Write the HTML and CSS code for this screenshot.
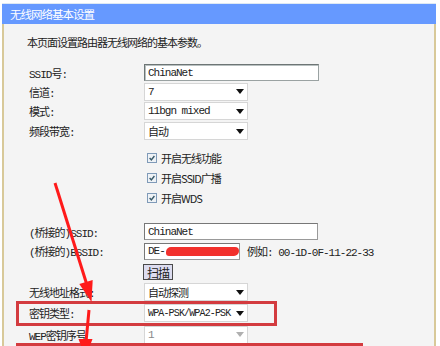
FILE: index.html
```html
<!DOCTYPE html>
<html>
<head>
<meta charset="utf-8">
<link rel="stylesheet" href="styles.css">
</head>
<body>
<div class="panel">
  <div class="hd">无线网络基本设置</div>
  <div class="bd">
    <p class="intro">本页面设置路由器无线网络的基本参数。</p>
    <div class="row h19"><span class="lbl">SSID号:</span><span class="txt ssid">ChinaNet</span></div>
    <div class="row h19"><span class="lbl">信道:</span><span class="sel"><span class="val">7</span><i class="arr"></i></span></div>
    <div class="row h20"><span class="lbl">模式:</span><span class="sel"><span class="val">11bgn mixed</span><i class="arr"></i></span></div>
    <div class="row h20"><span class="lbl">频段带宽:</span><span class="sel"><span class="val">自动</span><i class="arr"></i></span></div>
    <div class="row h20 first-cb"><span class="lbl"></span><span class="cb"><i class="box"><svg viewBox="0 0 10 10"><path d="M2 5 L4.2 7.3 L8 2.5" /></svg></i>开启无线功能</span></div>
    <div class="row h20"><span class="lbl"></span><span class="cb"><i class="box"><svg viewBox="0 0 10 10"><path d="M2 5 L4.2 7.3 L8 2.5" /></svg></i>开启SSID广播</span></div>
    <div class="row h20"><span class="lbl"></span><span class="cb"><i class="box"><svg viewBox="0 0 10 10"><path d="M2 5 L4.2 7.3 L8 2.5" /></svg></i>开启WDS</span></div>
    <div class="row h19 gap"><span class="lbl">(桥接的)SSID:</span><span class="txt bssid-name">ChinaNet</span></div>
    <div class="row h20"><span class="lbl">(桥接的)BSSID:</span><span class="txt mac">DE-<i class="redact"></i></span><span class="eg">例如: 00-1D-0F-11-22-33</span></div>
    <div class="row h22"><span class="lbl"></span><span class="btn">扫描</span></div>
    <div class="row h18"><span class="lbl">无线地址格式:</span><span class="sel"><span class="val">自动探测</span><i class="arr"></i></span></div>
    <div class="row h24"><span class="lbl">密钥类型:</span><span class="sel"><span class="val narrow">WPA-PSK/WPA2-PSK</span><i class="arr"></i></span></div>
    <div class="row h19"><span class="lbl">WEP密钥序号</span><span class="sel off"><span class="val">1</span><i class="arr"></i></span></div>
  </div>
</div>
<div class="mark m1"></div>
<div class="mark m2"></div>
<svg class="arrows" width="440" height="346" viewBox="0 0 440 346">
  <line x1="55" y1="183" x2="87" y2="285" />
  <polygon points="91.5,302 92.7,279.9 79.3,284.1" />
  <line x1="89" y1="310" x2="86" y2="342" />
  <polygon points="85.5,358 78.5,339 92.5,339" />
</svg>
</body>
</html>
```

FILE: styles.css
```css
html, body {
  margin: 0;
  padding: 0;
}
body {
  width: 440px;
  height: 346px;
  overflow: hidden;
  position: relative;
  background: #ffffff;
  font-family: "Liberation Mono", "Noto Sans CJK SC", monospace;
  font-size: 11px;
  letter-spacing: -1px;
  color: #222222;
}
.panel {
  margin: 3px 0 0 2px;
  width: 434px;
  border-top: 1px solid #dfe9f3;
}
.hd {
  height: 20px;
  background: #6699ff;
  color: #ffffff;
  padding-left: 8px;
  display: flex;
  align-items: center;
  font-family: "Noto Sans CJK SC", sans-serif;
  font-size: 11.5px;
}
.bd {
  box-sizing: border-box;
  height: 330px;
  background: #f4f4f4;
  border-left: 2px solid #d8c999;
  border-right: 2px solid #d8c999;
  padding-left: 25px;
}
.intro {
  margin: 0 0 13px -2px;
  padding-top: 10px;
  line-height: 16px;
  font-family: "Noto Sans CJK SC", sans-serif;
}
.row {
  display: flex;
  align-items: center;
}
.h18 { height: 18px; }
.h19 { height: 19px; }
.h20 { height: 20px; }
.h22 { height: 22px; }
.h24 { height: 24px; }
.first-cb { margin-top: 7px; }
.gap { margin-top: 14px; }
.lbl {
  width: 115px;
  flex: none;
  white-space: nowrap;
}
.txt {
  box-sizing: border-box;
  height: 17px;
  background: #ffffff;
  border: 1px solid #8a8a8a;
  padding-left: 3px;
  display: flex;
  align-items: center;
  white-space: nowrap;
  overflow: hidden;
}
.ssid {
  width: 175px;
  border-color: #6d7575 #9aa2a2 #9aa2a2 #6d7575;
  box-shadow: inset 1px 1px 0 #b8c0c0;
}
.bssid-name {
  width: 174px;
  border-color: #777 #999 #999 #777;
}
.mac {
  width: 96px;
  border-color: #777 #999 #999 #777;
}
.redact {
  display: inline-block;
  width: 74px;
  height: 9px;
  margin-left: 1px;
  background: #f2302c;
  border-radius: 5px 4px 5px 3px;
}
.eg {
  margin-left: 7px;
  white-space: nowrap;
}
.sel {
  box-sizing: border-box;
  width: 104px;
  height: 18px;
  background: #ffffff;
  border: 1px solid #d6d6d6;
  padding: 0 0 0 3px;
  display: flex;
  align-items: center;
  justify-content: space-between;
  white-space: nowrap;
}
.sel .narrow {
  font-size: 10px;
  letter-spacing: -0.85px;
}
.sel .arr {
  width: 0;
  height: 0;
  margin-right: 3px;
  border-left: 4px solid transparent;
  border-right: 4px solid transparent;
  border-top: 5px solid #111111;
}
.sel.off .val { color: #888888; }
.sel.off .arr { border-top-color: #b0b0b0; }
.cb {
  display: flex;
  align-items: center;
  margin-left: 3px;
  font-family: "Noto Sans CJK SC", sans-serif;
}
.cb .box {
  box-sizing: border-box;
  width: 10px;
  height: 10px;
  margin-right: 4px;
  border: 1px solid #7f9ab8;
  background: #eef2f6;
  display: flex;
}
.cb .box svg {
  width: 8px;
  height: 8px;
  fill: none;
  stroke: #3a5a6a;
  stroke-width: 1.8;
}
.btn {
  box-sizing: border-box;
  width: 30px;
  height: 16px;
  margin-left: -1px;
  border: 1px solid #4a4a4a;
  background: #dcdcef;
  display: flex;
  align-items: center;
  justify-content: center;
  font-family: "Noto Sans CJK SC", sans-serif;
  font-size: 12px;
}
.mark {
  position: absolute;
  box-sizing: border-box;
  border: 3px solid #d33b3f;
}
.m1 {
  left: 16px;
  top: 301px;
  width: 261px;
  height: 25px;
}
.m2 {
  left: 16px;
  top: 343px;
  width: 347px;
  height: 12px;
}
.arrows {
  position: absolute;
  left: 0;
  top: 0;
}
.arrows line {
  stroke: #ff1a1a;
  stroke-width: 3;
}
.arrows polygon {
  fill: #ff1a1a;
}
```
